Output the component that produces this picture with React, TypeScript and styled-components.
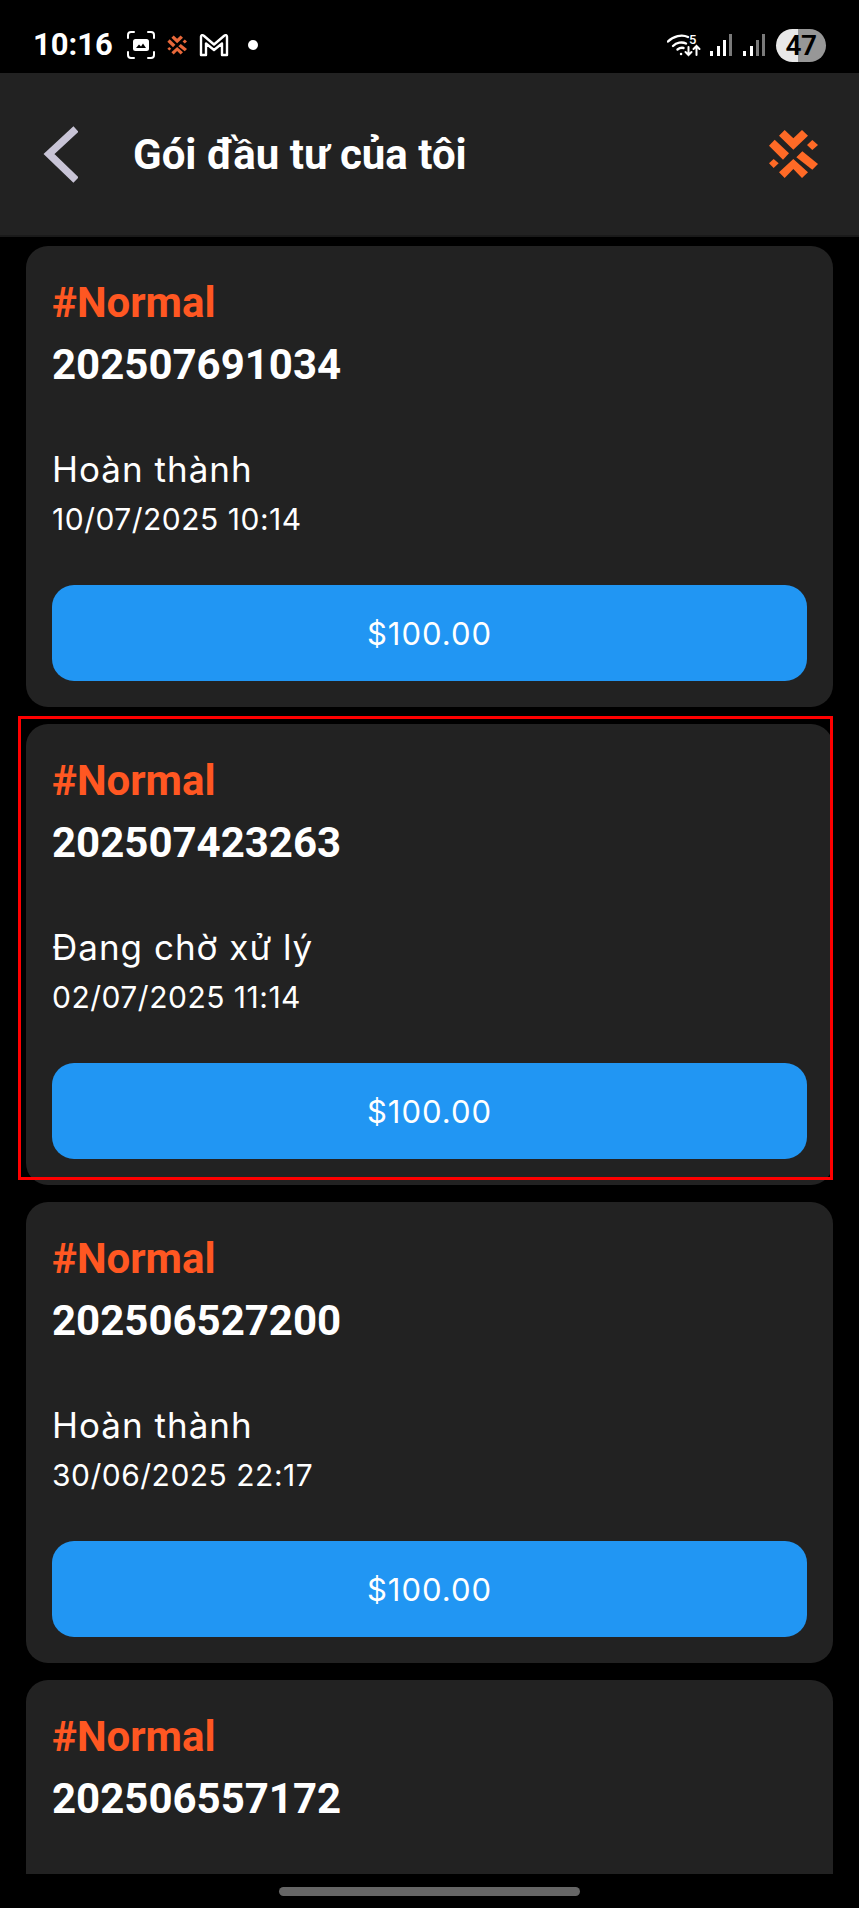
import type { CSSProperties } from 'react';
import styled, { createGlobalStyle } from 'styled-components';

interface Order {
    id: string;
    status?: string;
    date?: string;
    highlighted?: boolean;
}

const orders: Order[] = [
    { id: '202507691034', status: 'Hoàn thành', date: '10/07/2025 10:14' },
    { id: '202507423263', status: 'Đang chờ xử lý', date: '02/07/2025 11:14', highlighted: true },
    { id: '202506527200', status: 'Hoàn thành', date: '30/06/2025 22:17' },
    { id: '202506557172' },
];

const GlobalStyle = createGlobalStyle`
    html, body {
        margin: 0;
        padding: 0;
        background-color: #000;
    }
    * {
        box-sizing: border-box;
    }
`;

const Screen = styled.div`
    width: 859px;
    height: 1908px;
    display: flex;
    flex-direction: column;
    overflow: hidden;
    background-color: #000;
    color: #fff;
    font-family: Roboto, 'Liberation Sans', sans-serif;
`;

const StatusBar = styled.div`
    height: 73px;
    flex-shrink: 0;
    display: flex;
    align-items: center;
    justify-content: space-between;
    padding: 17px 33px 0 33px;
`;

const StatusGroup = styled.div`
    display: flex;
    align-items: center;
`;

const Time = styled.span`
    font-size: 31px;
    font-weight: 700;
    line-height: 36px;
    margin-right: 14px;
`;

const Dot = styled.span`
    width: 10px;
    height: 10px;
    border-radius: 50%;
    background-color: #fff;
    margin-left: 19px;
`;

const Battery = styled.div`
    width: 50px;
    height: 33px;
    margin-left: 11px;
    border-radius: 17px;
    display: flex;
    align-items: center;
    justify-content: center;
    background: linear-gradient(90deg, #e8e8e8 0 45%, #979797 45% 100%);
    color: #000;
    font-size: 28px;
    font-weight: 600;
    letter-spacing: -0.5px;
`;

const Header = styled.header`
    height: 164px;
    flex-shrink: 0;
    display: flex;
    align-items: center;
    padding: 0 41px 0 43px;
    background-color: #222222;
    border-bottom: 2px solid #1a1a1a;
`;

const BackIcon = styled.svg`
    width: 35px;
    height: 62px;
    margin-right: 55px;
    flex-shrink: 0;
`;

const Title = styled.h1`
    flex: 1;
    margin: 0;
    padding-top: 2px;
    font-size: 42px;
    font-weight: 700;
    line-height: 48px;
    color: #fff;
`;

const List = styled.main`
    flex: 1;
    min-height: 0;
    overflow: hidden;
    display: flex;
    flex-direction: column;
    gap: 17px;
    padding: 9px 26px 0 26px;
`;

const Card = styled.section`
    position: relative;
    height: 461px;
    flex-shrink: 0;
    display: flex;
    flex-direction: column;
    padding: 26px;
    border-radius: 22px;
    background-color: #222222;
`;

const Tag = styled.div`
    padding-top: 2px;
    font-size: 42px;
    font-weight: 700;
    line-height: 58px;
    color: #ff5722;
`;

const OrderId = styled.div`
    margin-top: 1px;
    font-size: 42px;
    font-weight: 700;
    line-height: 64px;
    color: #fff;
`;

const Status = styled.div`
    margin-top: 47px;
    font-family: Inter, 'Noto Sans', sans-serif;
    font-size: 35px;
    letter-spacing: 1px;
    line-height: 50px;
    color: #fff;
`;

const DateText = styled.div`
    margin-top: 5px;
    font-family: Inter, 'Noto Sans', sans-serif;
    font-size: 30px;
    letter-spacing: 0.5px;
    line-height: 40px;
    color: #fff;
`;

const AmountButton = styled.button`
    margin-top: auto;
    height: 96px;
    flex-shrink: 0;
    border: none;
    border-radius: 22px;
    background-color: #2196f3;
    color: #fff;
    font-family: Inter, 'Noto Sans', sans-serif;
    font-size: 31px;
    letter-spacing: 1px;
`;

const Highlight = styled.div`
    position: absolute;
    top: -8px;
    left: -8px;
    right: 0;
    bottom: 5px;
    border: 3px solid #ff0000;
    pointer-events: none;
`;

const HomeArea = styled.div`
    height: 34px;
    flex-shrink: 0;
    display: flex;
    justify-content: center;
    padding-top: 13px;
`;

const HomeBar = styled.div`
    width: 301px;
    height: 9px;
    border-radius: 5px;
    background-color: #666666;
`;

const Logo = ({ size, color }: { size: number; color: string }) => (
    <svg width={size} height={size} viewBox="55 30 150 150" style={{ flexShrink: 0 }}>
        <g fill={color}>
            <polygon points="88,50 105,33 131,58 157,33 175,50 131,92" />
            <polygon points="88,160 131,120 175,160 157,177 131,150 105,177" />
            <polygon points="58,80 75,62 118,103 100,122" />
            <polygon points="140,115 158,97 205,135 188,152" />
            <polygon points="172,78 188,63 205,78 188,93" />
            <polygon points="58,133 72,120 87,133 72,147" />
        </g>
    </svg>
);

const CaptureIcon = () => (
    <svg width="28" height="28" viewBox="0 0 28 28" fill="none" style={{ marginRight: 12 }}>
        <g stroke="#fff" strokeWidth="2" strokeLinecap="round">
            <path d="M1 7V4a3 3 0 0 1 3-3h3" />
            <path d="M21 1h3a3 3 0 0 1 3 3v3" />
            <path d="M27 21v3a3 3 0 0 1-3 3h-3" />
            <path d="M7 27H4a3 3 0 0 1-3-3v-3" />
        </g>
        <rect x="6" y="8" width="16" height="12" rx="2.5" fill="#fff" />
        <path d="M9 17l3-3.5 2 2 2-3 3 4.500z" fill="#000" />
    </svg>
);

const MailIcon = () => (
    <svg width="30" height="24" viewBox="0 0 30 24" fill="none" style={{ marginLeft: 12 }}>
        <path
            d="M2 22V3.500a1.500 1.500 0 0 1 2.500-1L15 11.500 25.500 2.500a1.500 1.500 0 0 1 2.500 1V22h-5V10.500L15 17 7 10.500V22z"
            stroke="#fff"
            strokeWidth="2.400"
            strokeLinejoin="round"
        />
    </svg>
);

const WifiIcon = () => (
    <svg width="35" height="24" viewBox="0 0 35 24" fill="none">
        <g stroke="#fff" strokeWidth="2.400" strokeLinecap="round">
            <path d="M1 8.500C6 3 15 1 21 4" />
            <path d="M6 13c3.500-3.500 9-4.500 13-2.500" />
            <path d="M10.500 16.500c2-1.500 4-2 6-1.500" />
            <path d="M14 21h.1" />
            <path d="M21.500 14v8M18.500 19l3 3 3-3" strokeWidth="2" />
            <path d="M29.500 22v-9M26.500 16l3-3 3 3" strokeWidth="2" />
        </g>
        <text x="22" y="10.500" fontFamily="Roboto, sans-serif" fontSize="13" fontWeight="500" fill="#fff">
            5
        </text>
    </svg>
);

const SignalIcon = ({ strong, style }: { strong: number; style?: CSSProperties }) => (
    <svg width="22" height="22" viewBox="0 0 22 22" style={style}>
        {[
            { x: 0, y: 17 },
            { x: 7, y: 12 },
            { x: 13, y: 6 },
            { x: 19, y: 0 },
        ].map((bar, i) => (
            <rect
                key={bar.x}
                x={bar.x}
                y={bar.y}
                width="3"
                height={22 - bar.y}
                fill={i < strong ? '#fff' : '#7a7a7a'}
            />
        ))}
    </svg>
);

const BackArrow = () => (
    <BackIcon viewBox="0 0 35 62" fill="none">
        <path d="M33 6L6 31l27 26" stroke="#c8c4d6" strokeWidth="7.500" />
    </BackIcon>
);

const App = () => {
    return (
        <Screen>
            <GlobalStyle />
            <StatusBar>
                <StatusGroup>
                    <Time>10:16</Time>
                    <CaptureIcon />
                    <Logo size={20} color="#e8683a" />
                    <MailIcon />
                    <Dot />
                </StatusGroup>
                <StatusGroup>
                    <WifiIcon />
                    <SignalIcon strong={3} style={{ marginLeft: 8 }} />
                    <SignalIcon strong={2} style={{ marginLeft: 11 }} />
                    <Battery>47</Battery>
                </StatusGroup>
            </StatusBar>
            <Header>
                <BackArrow />
                <Title>Gói đầu tư của tôi</Title>
                <Logo size={50} color="#ff6a26" />
            </Header>
            <List>
                {orders.map((order) => (
                    <Card key={order.id}>
                        <Tag>#Normal</Tag>
                        <OrderId>{order.id}</OrderId>
                        {order.status && (
                            <>
                                <Status>{order.status}</Status>
                                <DateText>{order.date}</DateText>
                                <AmountButton>$100.00</AmountButton>
                            </>
                        )}
                        {order.highlighted && <Highlight />}
                    </Card>
                ))}
            </List>
            <HomeArea>
                <HomeBar />
            </HomeArea>
        </Screen>
    );
};

export default App;
